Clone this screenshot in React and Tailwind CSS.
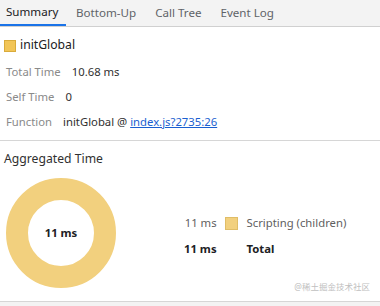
import React from 'react';

const TABS = ['Summary', 'Bottom-Up', 'Call Tree', 'Event Log'];

const Row = ({ label, children }) => (
  <div className="flex items-center h-[25px] pl-[6px]">
    <span className="text-[#8a8a8a] mr-[11px]">{label}</span>
    <span className="text-[#303030]">{children}</span>
  </div>
);

export default function App() {
  return (
    <div
      className="w-[380px] h-[306px] bg-[#f3f3f3] text-[11.3px] overflow-hidden"
      style={{ fontFamily: '"Noto Sans", "Noto Sans CJK SC", sans-serif' }}
    >
      <div className="flex h-[27px] bg-[#f3f3f3] border-b border-[#d0d0d0]">
        {TABS.map((t, i) => (
          <div
            key={t}
            className={`flex items-center h-full text-[11.6px] ${
              i === 0
                ? 'pl-[6px] pr-[10px] w-[66px] border-b-2 border-[#1a73e8] text-[#202124]'
                : 'pl-[10px] pr-[9px] text-[#5f6368]'
            }`}
          >
            {t}
          </div>
        ))}
      </div>

      <div className="bg-white h-[275px] border-b border-[#d6d6d6]">
        <div className="flex items-center h-[34px] pt-[3px] pl-[4px]">
          <span className="w-[12px] h-[12px] bg-[#f2c557] border border-[#d9ab3b] mr-[4px]" />
          <span className="text-[12.2px] text-[#202124]">initGlobal</span>
        </div>
        <div className="mt-[-1px]">
          <Row label="Total Time">10.68 ms</Row>
          <Row label="Self Time">0</Row>
          <Row label="Function">
            initGlobal @ <span className="text-[#1a5fd0] underline">index.js?2735:26</span>
          </Row>
        </div>
        <div className="mt-[5px] border-t border-[#d6d6d6]" />
        <div className="pl-[4px] pt-[9px] text-[12.2px] text-[#303030] leading-[17px]">Aggregated Time</div>

        <div className="flex items-start mt-[11px]">
          <div className="relative ml-[6px] w-[110px] h-[110px]">
            <svg width="110" height="110" viewBox="0 0 110 110">
              <circle cx="55" cy="55" r="44" fill="none" stroke="#f2d07e" strokeWidth="22" />
            </svg>
            <div className="absolute inset-0 flex items-center justify-center font-bold text-[#202124]">
              11 ms
            </div>
          </div>
          <div className="ml-[68px] mt-[37px] grid grid-cols-[auto_auto_auto] items-center gap-y-[9px]">
            <span className="text-[#5f5f5f] text-right">11 ms</span>
            <span className="ml-[8px] w-[13px] h-[13px] bg-[#f2d07e] border border-[#e0bd67]" />
            <span className="ml-[9px] text-[#5f5f5f]">Scripting (children)</span>
            <span className="font-bold text-[#202124] text-right">11 ms</span>
            <span />
            <span className="ml-[9px] font-bold text-[#202124]">Total</span>
          </div>
        </div>
        <div className="flex justify-end pr-[10px] mt-[-7px] text-[8.5px] text-[#c0c0c0]">@稀土掘金技术社区</div>
      </div>
    </div>
  );
}
